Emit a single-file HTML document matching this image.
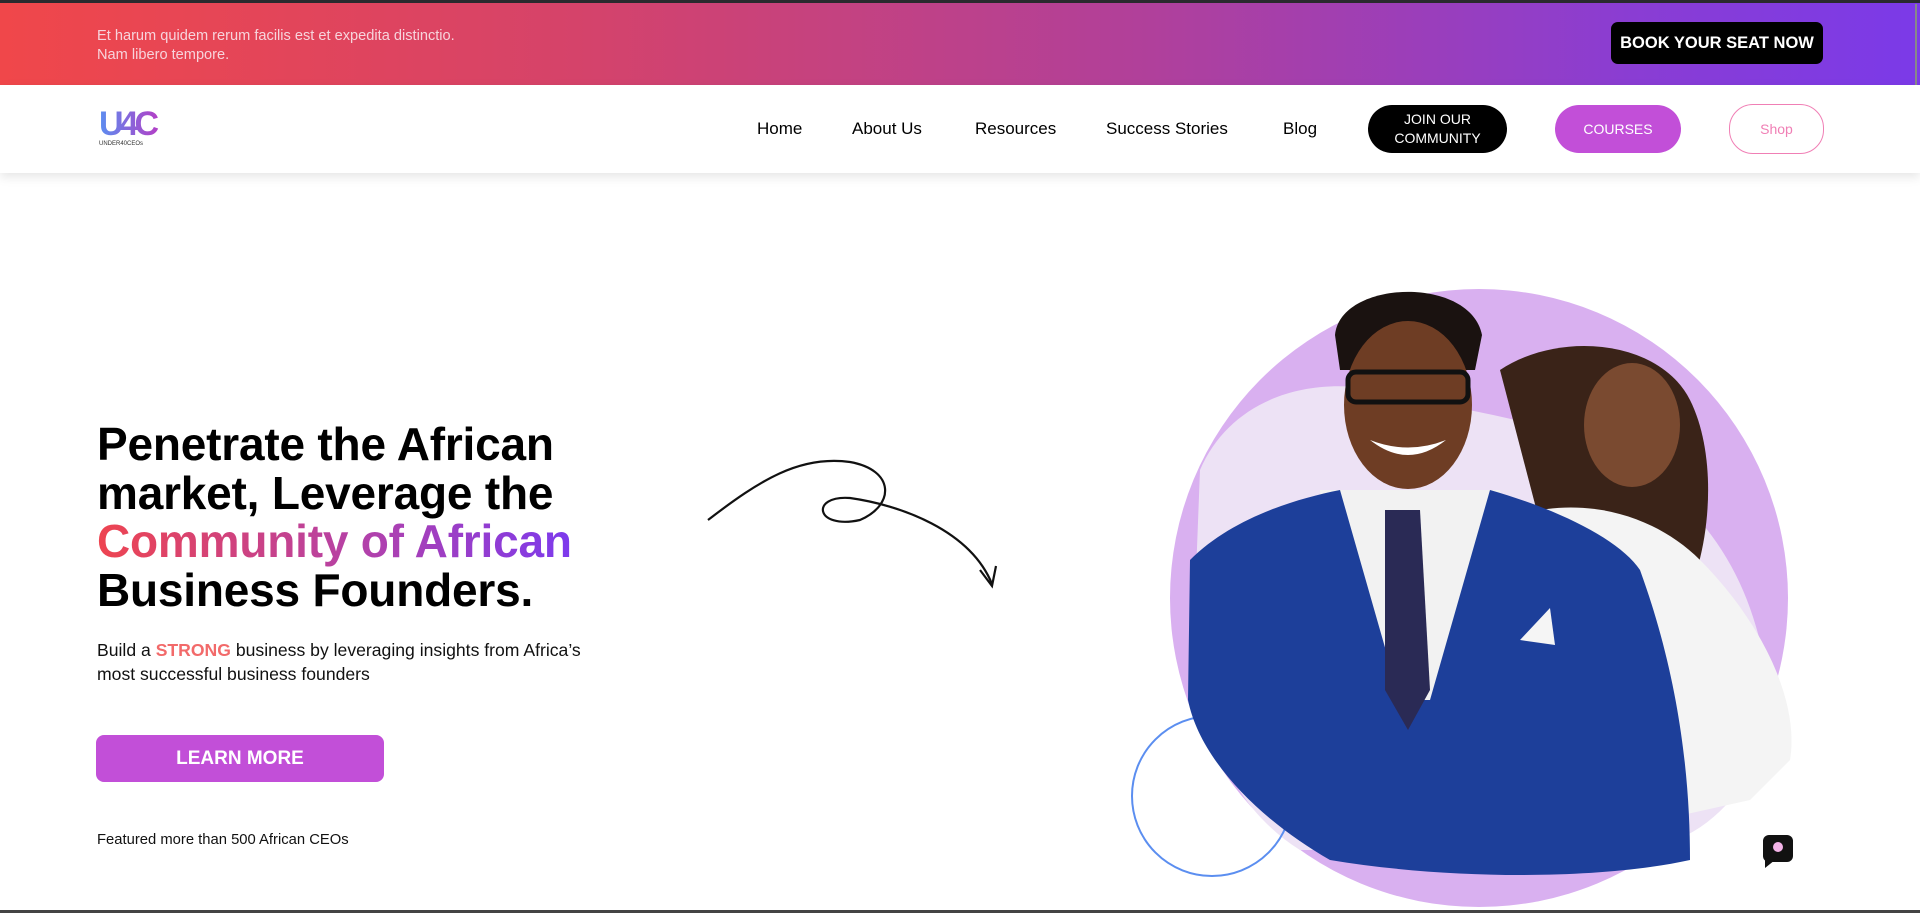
<!DOCTYPE html>
<html><head><meta charset="utf-8"><style>
*{margin:0;padding:0;box-sizing:border-box}
body{width:1920px;height:913px;overflow:hidden;background:#fff;font-family:"Liberation Sans",Arial,sans-serif;position:relative}
.top{position:absolute;left:0;top:0;width:1920px;height:3px;background:#2a2a2e}
.banner{position:absolute;left:0;top:3px;width:1920px;height:82px;background:linear-gradient(90deg,#f0474a 0%,#d5436a 30%,#b0409b 60%,#8a3dd3 85%,#7b3ae8 100%)}
.banner p{position:absolute;left:97px;color:#f7d4dc;font-size:14.6px;line-height:19px}
.book{position:absolute;left:1611px;top:19px;width:212px;height:42px;background:#000;border-radius:7px;color:#fff;font-weight:bold;font-size:16.5px;display:flex;align-items:center;justify-content:center}
.nav{position:absolute;left:0;top:85px;width:1920px;height:88px;background:#fff;box-shadow:0 4px 10px rgba(0,0,0,.1)}
.nav a{position:absolute;top:34px;font-size:17px;color:#000;text-decoration:none}
.btn{position:absolute;border-radius:24px;display:flex;align-items:center;justify-content:center;text-align:center;font-size:14px;line-height:19px}
h1{position:absolute;left:97px;top:420px;font-size:46px;line-height:48.5px;font-weight:bold;color:#000;letter-spacing:-.2px}
.grad{background:linear-gradient(90deg,#ee4450,#b441a8 55%,#7c3aed);-webkit-background-clip:text;background-clip:text;color:transparent}
.sub{position:absolute;left:97px;top:638px;font-size:17.6px;line-height:24px;color:#111}
.learn{position:absolute;left:96px;top:735px;width:288px;height:47px;background:#c24fd8;border-radius:8px;color:#fff;font-weight:bold;font-size:19px;display:flex;align-items:center;justify-content:center}
.feat{position:absolute;left:97px;top:832px;font-size:14.8px;color:#111}
.scroll{position:absolute;right:3px;top:4px;width:2px;height:106px;background:#888}
.bot{position:absolute;left:0;top:910px;width:1920px;height:3px;background:#444}
</style></head><body>
<div class="top"></div>
<div class="banner">
<p style="top:24px">Et harum quidem rerum facilis est et expedita distinctio.</p>
<p style="top:43px">Nam libero tempore.</p>
<div class="book">BOOK YOUR SEAT NOW</div>
</div>
<div class="scroll"></div>
<div class="nav">
<svg style="position:absolute;left:98px;top:20px" width="62" height="45" viewBox="0 0 62 45">
<defs><linearGradient id="lg" x1="0" x2="1"><stop offset="0" stop-color="#5b8ef0"/><stop offset="1" stop-color="#b33fc6"/></linearGradient></defs>
<text x="1" y="30" font-family="Liberation Sans" font-weight="bold" font-size="34" fill="url(#lg)" letter-spacing="-4">U4C</text>
<text x="1" y="40" font-family="Liberation Sans" font-size="6" fill="#333">UNDER40CEOs</text>
</svg>
<a style="left:757px">Home</a>
<a style="left:852px">About Us</a>
<a style="left:975px">Resources</a>
<a style="left:1106px">Success Stories</a>
<a style="left:1283px">Blog</a>
<div class="btn" style="left:1368px;top:20px;width:139px;height:48px;background:#000;color:#fff">JOIN OUR<br>COMMUNITY</div>
<div class="btn" style="left:1555px;top:20px;width:126px;height:48px;background:#c24fd8;color:#fff">COURSES</div>
<div class="btn" style="left:1729px;top:19px;width:95px;height:50px;border:1px solid #f07fb5;color:#f07fb5">Shop</div>
</div>

<h1>Penetrate the African<br>market, Leverage the<br><span class="grad">Community of African</span><br>Business Founders.</h1>
<div class="sub">Build a <b style="color:#f26a6a">STRONG</b> business by leveraging insights from Africa’s<br>most successful business founders</div>
<div class="learn">LEARN MORE</div>
<div class="feat">Featured more than 500 African CEOs</div>

<svg style="position:absolute;left:0;top:0" width="1920" height="913">
<path d="M708 520 C760 480 800 455 850 462 C895 470 895 505 860 520 C815 530 810 495 850 498 C900 505 970 530 992 584" fill="none" stroke="#111" stroke-width="2.2"/>
<path d="M980 570 L992 586 L996 566" fill="none" stroke="#111" stroke-width="2.2"/>
<circle cx="1479" cy="598" r="309" fill="#d9b0f0"/>
<path d="M1200 470 C1230 400 1310 370 1400 395 C1480 415 1560 420 1640 470 C1720 520 1760 600 1770 700 C1760 780 1720 830 1650 850 L1300 850 C1220 800 1190 700 1195 600 Z" fill="#ede2f5"/>
<circle cx="1212" cy="796" r="80" fill="none" stroke="#5b8ef0" stroke-width="2"/>
<!-- woman -->
<path d="M1500 370 C1560 330 1660 340 1690 400 C1720 460 1710 560 1680 610 L1560 600 Z" fill="#3a2318"/>
<ellipse cx="1632" cy="425" rx="48" ry="62" fill="#7a4a30"/>
<path d="M1540 510 C1600 500 1660 520 1700 560 C1760 620 1800 700 1790 760 L1750 800 L1660 820 L1580 800 Z" fill="#f4f4f4"/>
<!-- man -->
<path d="M1335 335 C1340 280 1470 275 1482 335 L1475 370 L1340 370 Z" fill="#1a1210"/>
<ellipse cx="1408" cy="405" rx="64" ry="84" fill="#6e3d24"/>
<rect x="1348" y="372" width="120" height="30" rx="8" fill="none" stroke="#111" stroke-width="5"/>
<path d="M1370 440 Q1408 470 1446 440 Q1408 455 1370 440" fill="#fff"/>
<path d="M1320 490 L1500 490 L1520 700 L1330 700 Z" fill="#f2f2f2"/>
<path d="M1190 560 C1230 520 1290 500 1340 490 L1400 700 L1430 700 L1490 490 C1560 510 1620 540 1640 570 C1680 680 1690 780 1690 860 C1600 880 1450 880 1330 860 C1260 820 1200 760 1188 700 Z" fill="#1d3f9a"/>
<path d="M1385 510 L1420 510 L1430 690 L1408 730 L1385 690 Z" fill="#2a2a55"/>
<path d="M1520 640 L1550 608 L1555 645 Z" fill="#f5f5f5"/>
<!-- chat -->
<rect x="1763" y="835" width="30" height="27" rx="6" fill="#111"/>
<path d="M1765 858 L1765 868 L1775 860 Z" fill="#111"/>
<circle cx="1778" cy="847" r="5" fill="#f3b3e8"/>
</svg>
<div class="bot"></div>
</body></html>
